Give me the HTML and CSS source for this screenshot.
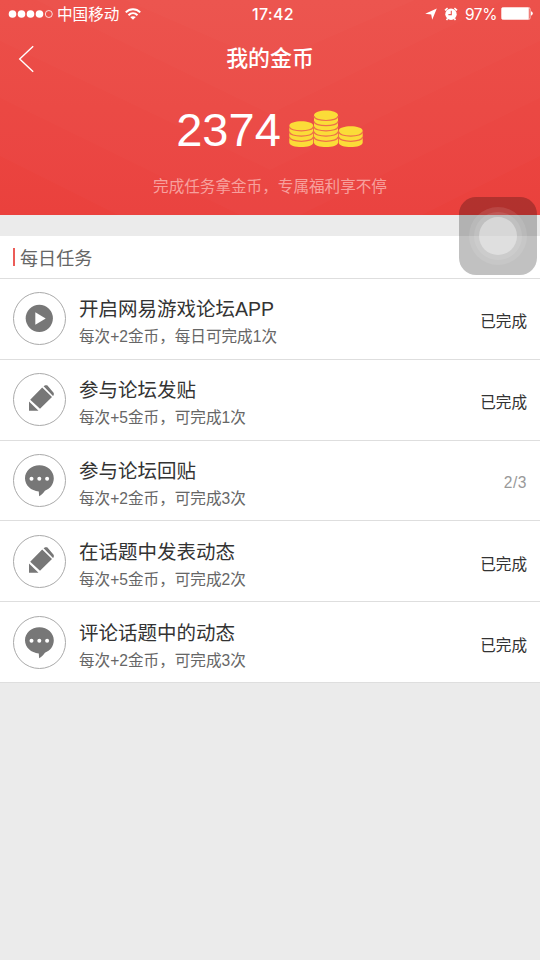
FILE: index.html
```
<!DOCTYPE html>
<html lang="zh-CN">
<head>
<meta charset="utf-8">
<title>我的金币</title>
<link rel="stylesheet" href="styles.css">
</head>
<body>
<svg class="defs" aria-hidden="true">
  <symbol id="play" viewBox="1 1 51 51"><circle cx="26.3" cy="26.3" r="13.6"/><path class="cut" d="M22.3 20.3v12.4l10.4-6.2z"/></symbol>
  <symbol id="pencil" viewBox="1 1 51 51"><path d="M16 28.5v9.3h9.5zM17.2 26.7l12-12.2 9.8 9.4L27 35.8zM30.6 13.3l1.6-1h2l6.6 7.6v2.2l-.8 1z"/></symbol>
  <symbol id="bubble" viewBox="1 1 51 51"><path d="M26.4 11.3C18.3 11.3 12 17 12 24.3c0 7.2 6.2 12.6 13.8 13.1l.3 4.9c2.2-1.3 4.2-3.2 5.8-5.6 5.3-1.9 8.9-6.6 8.9-12.4 0-7.3-6.3-13-14.4-13z"/><g class="cut"><circle cx="18.5" cy="24.8" r="2"/><circle cx="26.3" cy="24.8" r="2"/><circle cx="34.1" cy="24.8" r="2"/></g></symbol>
</svg>
<header class="hero">
  <svg class="hero-bg" viewBox="0 0 540 215" preserveAspectRatio="none" aria-hidden="true">
    <path d="M125 0L270 63 415 0z"/>
    <path d="M36 0L270 114 504 0z"/>
    <path d="M0 41L270 170 540 41V0H0z"/>
    <path d="M0 98L240 215H300L540 98V0H0z"/>
    <path d="M0 156L118 215H422L540 156V0H0z"/>
  </svg>
  <div class="statusbar">
    <div class="carrier">
      <svg width="46" height="10" viewBox="0 0 46 10"><g fill="#fff"><circle cx="4.5" cy="5" r="3.8"/><circle cx="13.5" cy="5" r="3.8"/><circle cx="22.5" cy="5" r="3.8"/><circle cx="31.5" cy="5" r="3.8"/></g><circle cx="40.8" cy="5" r="3.5" fill="none" stroke="#fff" stroke-width=".8"/></svg>
      <span>中国移动</span>
      <svg class="wifi" width="16" height="12" viewBox="0 0 16 12" fill="none" stroke="#fff" stroke-width="2"><path d="M.8 4.4C4.8.2 11.2.2 15.2 4.4"/><path d="M3.5 7.2c2.6-2.6 6.4-2.6 9 0"/><path d="M8 11.8L5.2 9.1C6.8 7.8 9.2 7.8 10.8 9.1z" fill="#fff" stroke="none"/></svg>
    </div>
    <span class="clock">17:42</span>
    <div class="power">
      <svg width="12" height="12" viewBox="0 0 12 12"><path fill="#fff" d="M11.8.4L7.2 11.8 6.2 6.4.2 5.8z"/></svg>
      <svg class="alarm" width="14" height="14" viewBox="0 0 14 14"><circle cx="7" cy="7.2" r="5.7" fill="#fff"/><path d="M1 3.4L3.6 1.2M13 3.4L10.4 1.2M3.5 11.8l-1 1.2M10.5 11.8l1 1.2" stroke="#fff" stroke-width="1.6"/><path d="M7.3 3.8v3.8H4.4" fill="none" stroke="#ed554f" stroke-width="1.1"/></svg>
      <span class="pct">97%</span>
      <svg width="32" height="13" viewBox="0 0 32 13"><rect x=".5" y=".5" width="28.6" height="12" rx="1.6" fill="none" stroke="#fff" stroke-opacity=".65"/><rect x=".8" y=".8" width="27" height="11.4" rx=".8" fill="#fff"/><path d="M30 4.3q1.8.6 1.8 2.2T30 8.7z" fill="#fff"/></svg>
    </div>
  </div>
  <div class="navbar">
    <svg width="16" height="28" viewBox="0 0 16 28"><path d="M15.2 1.3L1.7 14l13.5 12.7" fill="none" stroke="#fff" stroke-width="1.4"/></svg>
    <h1>我的金币</h1>
  </div>
  <div class="balance">
    <span class="amount">2374</span>
    <svg class="coins" width="75" height="38" viewBox="0 0 75 38">
      <g fill="#fbdc38">
        <path d="M.3 16C.3 9.8 24.3 9.8 24.3 16v16.4c0 6.1-24 6.1-24 0z"/>
        <path d="M25 5.5C25-1.1 49-1.1 49 5.5v26.9c0 6.1-24 6.1-24 0z"/>
        <path d="M49.7 21C49.7 14.8 73.7 14.8 73.7 21v11.4c0 6.1-24 6.1-24 0z"/>
      </g>
      <g fill="none" stroke="#ee704a" stroke-width="1.2">
        <path d="M.3 16.4c0 6 24 6 24 0M.3 21.6c0 6 24 6 24 0M.3 26.8c0 6 24 6 24 0"/>
        <path d="M25 6c0 6 24 6 24 0M25 11.2c0 6 24 6 24 0M25 16.4c0 6 24 6 24 0M25 21.6c0 6 24 6 24 0M25 26.8c0 6 24 6 24 0"/>
        <path d="M49.7 21.6c0 6 24 6 24 0M49.7 26.8c0 6 24 6 24 0"/>
      </g>
    </svg>
  </div>
  <p class="slogan">完成任务拿金币，专属福利享不停</p>
</header>
<main class="tasks">
  <h2><i class="mark"></i>每日任务</h2>
  <ul>
    <li><svg class="icon"><use href="#play"/></svg><div class="info"><h3>开启网易游戏论坛APP</h3><p>每次+2金币，每日可完成1次</p></div><span class="state">已完成</span></li>
    <li><svg class="icon"><use href="#pencil"/></svg><div class="info"><h3>参与论坛发贴</h3><p>每次+5金币，可完成1次</p></div><span class="state">已完成</span></li>
    <li><svg class="icon"><use href="#bubble"/></svg><div class="info"><h3>参与论坛回贴</h3><p>每次+2金币，可完成3次</p></div><span class="state pending">2/3</span></li>
    <li><svg class="icon"><use href="#pencil"/></svg><div class="info"><h3>在话题中发表动态</h3><p>每次+5金币，可完成2次</p></div><span class="state">已完成</span></li>
    <li><svg class="icon"><use href="#bubble"/></svg><div class="info"><h3>评论话题中的动态</h3><p>每次+2金币，可完成3次</p></div><span class="state">已完成</span></li>
  </ul>
</main>
<div class="assistive"><div class="ring"><div class="ring mid"><div class="ring core"></div></div></div></div>
</body>
</html>
```
FILE: styles.css
```
* { box-sizing: border-box; margin: 0; padding: 0; }
body {
  width: 540px;
  min-height: 960px;
  position: relative;
  background: #ebebeb;
  font-family: "Liberation Sans", "Noto Sans CJK SC", sans-serif;
  color: #333;
}
svg { display: block; flex: none; }
.defs { position: absolute; width: 0; height: 0; }
.hero {
  position: relative;
  height: 215px;
  background: linear-gradient(#ec4b45, #ea413d);
  color: #fff;
}
.hero-bg { position: absolute; inset: 0; width: 540px; height: 215px; fill: #fff; fill-opacity: .017; }
.statusbar {
  position: relative;
  display: grid;
  grid-template-columns: 1fr auto 1fr;
  align-items: center;
  height: 28px;
  padding: 0 8px;
  font-size: 15.6px;
  line-height: 28px;
}
.carrier, .power { display: flex; align-items: center; height: 28px; }
.carrier svg, .power svg { margin-top: -1px; }
.carrier span { margin-left: 3px; padding-top: 1px; line-height: 27px; }
.carrier .wifi { margin-left: 6px; }
.clock { font: 500 16px/28px Inter, sans-serif; letter-spacing: .3px; margin-left: 6px; }
.power { justify-content: flex-end; margin-right: -1px; }
.power .alarm { margin-left: 7px; }
.pct { font: 400 15.5px/27px Inter, sans-serif; margin: 1px 4px 0 7px; letter-spacing: -.4px; }
.navbar {
  position: relative;
  display: grid;
  grid-template-columns: 18px 1fr 18px;
  align-items: center;
  height: 60px;
  padding: 2px 18px 0;
}
h1 { font-size: 21.9px; font-weight: 500; line-height: 58px; text-align: center; }
.balance {
  position: relative;
  display: flex;
  justify-content: center;
  height: 85px;
  padding-top: 16px;
}
.amount { font-size: 47px; line-height: 52px; }
.coins { margin: 6px 0 0 8px; }
.slogan {
  position: relative;
  font-size: 15.6px;
  line-height: 28px;
  text-align: center;
  color: #f7a09d;
}
.tasks { margin-top: 21px; background: #fff; }
h2 {
  display: flex;
  align-items: center;
  height: 43px;
  padding-left: 13px;
  border-bottom: 1px solid #dedede;
  font-size: 18.1px;
  font-weight: 400;
  color: #666;
}
.mark { width: 2px; height: 18px; margin-right: 5px; background: #ec5c58; }
ul { list-style: none; }
li {
  display: flex;
  align-items: center;
  height: 80.8px;
  padding: 0 13px;
  border-bottom: 1px solid #dedede;
}
.icon { width: 53px; height: 53px; border: 1px solid #aaa; border-radius: 50%; fill: #777; }
.cut { fill: #fff; }
.info { flex: 1; margin-left: 13px; padding-top: 8px; }
h3 { font-size: 19.5px; font-weight: 400; line-height: 29px; }
.info p { font-size: 15.6px; line-height: 26px; color: #666; }
.state { font-size: 15.6px; padding-top: 3px; }
.pending { color: #999; letter-spacing: .5px; padding-top: 5px; }
.assistive {
  position: absolute;
  left: 459px;
  top: 197px;
  width: 78px;
  height: 78px;
  border-radius: 17px;
  background: rgba(0, 0, 0, .245);
  display: grid;
  place-items: center;
}
.ring {
  width: 58px;
  height: 58px;
  border-radius: 50%;
  background: rgba(255, 255, 255, .1);
  display: grid;
  place-items: center;
}
.mid { width: 48px; height: 48px; }
.core { width: 38px; height: 38px; background: rgba(255, 255, 255, .37); }
```
